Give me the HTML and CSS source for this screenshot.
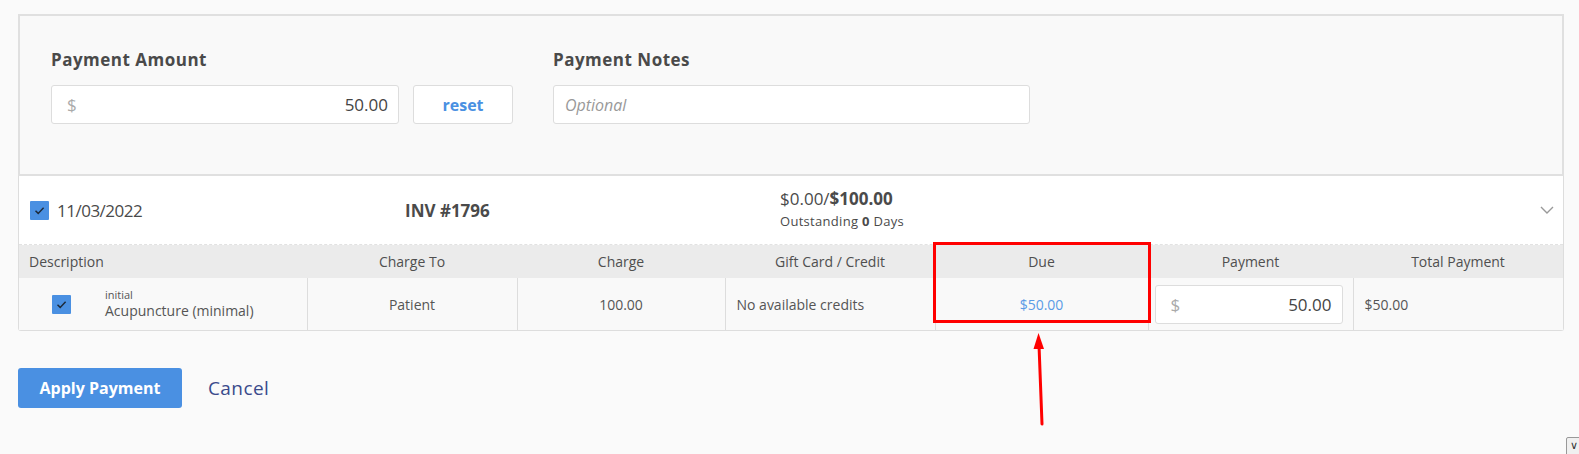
FILE: index.html
```html
<!DOCTYPE html>
<html lang="en">
<head>
    <meta charset="UTF-8">
    <meta name="viewport" content="width=device-width, initial-scale=1.0">
    <title>Apply Payment</title>
    <link rel="stylesheet" href="styles.css">
</head>
<body>
    <div class="page">
        <div class="payment-panel">
            <div class="field">
                <div class="field-label">Payment Amount</div>
                <div class="field-row">
                    <div class="money-input amount-input">
                        <span class="currency">$</span>
                        <span class="money-value">50.00</span>
                    </div>
                    <button class="btn-reset">reset</button>
                </div>
            </div>
            <div class="field">
                <div class="field-label">Payment Notes</div>
                <div class="text-input notes-input"><span class="placeholder">Optional</span></div>
            </div>
        </div>

        <div class="invoice">
            <div class="invoice-head">
                <div class="invoice-date">
                    <span class="checkbox">
                        <svg viewBox="0 0 19 19" width="19" height="19"><path d="M5.5 9.8 L8.2 12.4 L13.6 6.8" fill="none" stroke="#1d2a3a" stroke-width="1.5"/></svg>
                    </span>
                    <span class="date-text">11/03/2022</span>
                </div>
                <div class="invoice-number">INV #1796</div>
                <div class="invoice-balance">
                    <div class="balance-amount">$0.00/<strong>$100.00</strong></div>
                    <div class="balance-age">Outstanding <strong>0</strong> Days</div>
                </div>
                <svg class="chevron" viewBox="0 0 14 8" width="14" height="8"><path d="M1 1 L7 7 L13 1" fill="none" stroke="#999" stroke-width="1.4"/></svg>
            </div>

            <table class="charges">
                <colgroup>
                    <col style="width: 288px">
                    <col style="width: 210px">
                    <col style="width: 208px">
                    <col style="width: 210px">
                    <col style="width: 213px">
                    <col style="width: 205px">
                    <col>
                </colgroup>
                <thead>
                    <tr>
                        <th class="col-desc">Description</th>
                        <th>Charge To</th>
                        <th>Charge</th>
                        <th>Gift Card / Credit</th>
                        <th>Due</th>
                        <th>Payment</th>
                        <th>Total Payment</th>
                    </tr>
                </thead>
                <tbody>
                    <tr>
                        <td class="col-desc">
                            <div class="desc">
                                <span class="checkbox">
                                    <svg viewBox="0 0 19 19" width="19" height="19"><path d="M5.5 9.8 L8.2 12.4 L13.6 6.8" fill="none" stroke="#1d2a3a" stroke-width="1.5"/></svg>
                                </span>
                                <div class="desc-text">
                                    <div class="desc-code">initial</div>
                                    <div class="desc-name">Acupuncture (minimal)</div>
                                </div>
                            </div>
                        </td>
                        <td>Patient</td>
                        <td>100.00</td>
                        <td class="cell-left">No available credits</td>
                        <td class="due">$50.00</td>
                        <td class="cell-payment">
                            <div class="money-input row-input">
                                <span class="currency">$</span>
                                <span class="money-value">50.00</span>
                            </div>
                        </td>
                        <td class="cell-left">$50.00</td>
                    </tr>
                </tbody>
            </table>
        </div>

        <div class="actions">
            <button class="btn-apply">Apply Payment</button>
            <a class="link-cancel" href="#">Cancel</a>
        </div>

        <!-- screenshot markup: box round Due and arrow -->
        <svg class="annotation" width="1579" height="454" viewBox="0 0 1579 454">
            <rect x="934.5" y="243.5" width="215" height="78" fill="none" stroke="#ff0000" stroke-width="3"/>
            <line x1="1042" y1="424" x2="1039" y2="345" stroke="#ff0000" stroke-width="3" stroke-linecap="round"/>
            <polygon points="1038.5,333 1033.5,349 1044,349" fill="#ff0000"/>
        </svg>

        <div class="corner-tab">&#x2228;</div>
    </div>
</body>
</html>
```

FILE: styles.css
```css
body {
    margin: 0;
    background: #fafafa;
    font-family: "Open Sans", Arial, sans-serif;
    color: #4a4a4a;
}
.page {
    position: relative;
    width: 1546px;
    padding: 14px 0 0 18px;
    height: 440px;
}
.payment-panel {
    display: flex;
    gap: 40px;
    background: #f9f9f9;
    border: 2px solid #e0e0e0;
    padding: 34px 31px 50px 31px;
}
.field-label {
    font-size: 17px;
    font-weight: bold;
    line-height: 20px;
    letter-spacing: 0.5px;
    color: #4a4a4a;
    margin-bottom: 15px;
}
.field-row {
    display: flex;
    gap: 14px;
}
.money-input {
    display: flex;
    align-items: center;
    justify-content: space-between;
    box-sizing: border-box;
    background: #fff;
    border: 1px solid #ddd;
    border-radius: 3px;
    height: 39px;
    padding: 0 10px 0 15px;
    font-size: 17px;
}
.currency {
    color: #aaa;
}
.money-value {
    color: #444;
}
.amount-input {
    width: 348px;
}
.btn-reset {
    width: 100px;
    height: 39px;
    background: #fff;
    border: 1px solid #ddd;
    border-radius: 3px;
    color: #4a90e2;
    font-family: inherit;
    font-size: 16px;
    font-weight: bold;
}
.text-input {
    display: flex;
    align-items: center;
    box-sizing: border-box;
    background: #fff;
    border: 1px solid #ddd;
    border-radius: 3px;
    height: 39px;
    padding: 0 11px;
}
.notes-input {
    width: 477px;
}
.placeholder {
    color: #999;
    font-style: italic;
    font-size: 16px;
}
.invoice {
    background: #fff;
    border: 1px solid #ddd;
    border-top: none;
    border-radius: 0 0 3px 3px;
}
.invoice-head {
    display: grid;
    grid-template-columns: 375px 375px 1fr 14px;
    align-items: center;
    height: 68px;
    padding: 0 9px 0 11px;
    border-bottom: 1px dashed #e2e2e2;
}
.invoice-date {
    display: flex;
    align-items: center;
    gap: 8px;
    font-size: 17px;
}
.date-text {
    letter-spacing: -0.5px;
}
.checkbox {
    display: inline-flex;
    width: 19px;
    height: 19px;
    background: #4a90e2;
    border-radius: 1px;
}
.invoice-number {
    font-size: 17px;
    font-weight: bold;
}
.balance-amount {
    font-size: 17px;
    line-height: 22px;
}
.balance-age {
    font-size: 13px;
    line-height: 22px;
    letter-spacing: 0.3px;
}
.charges {
    width: 100%;
    border-collapse: collapse;
    table-layout: fixed;
    font-size: 14px;
}
.charges th {
    height: 33px;
    padding: 0;
    background: #ebebeb;
    font-weight: normal;
    color: #4f4f4f;
    text-align: center;
}
.charges td {
    height: 52px;
    padding: 0;
    background: #f9f9f9;
    border-left: 1px solid #ddd;
    text-align: center;
    color: #555;
}
.charges .col-desc {
    text-align: left;
    padding-left: 10px;
    border-left: none;
}
.charges .cell-left {
    text-align: left;
    padding-left: 11px;
}
.charges .due {
    color: #5b9be6;
}
.charges .cell-payment {
    padding: 0 10px 0 6px;
}
.desc {
    display: flex;
    align-items: center;
    padding-left: 23px;
    gap: 34px;
}
.desc-code {
    font-size: 11px;
    line-height: 14px;
}
.desc-name {
    font-size: 14px;
    line-height: 18px;
}
.row-input {
    padding-right: 10px;
}
.actions {
    display: flex;
    align-items: center;
    gap: 26px;
    margin-top: 37px;
}
.btn-apply {
    width: 164px;
    height: 40px;
    background: #4a90e2;
    border: none;
    border-radius: 3px;
    color: #fff;
    font-family: inherit;
    font-size: 16px;
    font-weight: bold;
}
.link-cancel {
    color: #3b4a8c;
    font-size: 19px;
    letter-spacing: 0.4px;
    text-decoration: none;
}
.annotation {
    position: absolute;
    left: 0;
    top: 0;
    pointer-events: none;
}
.corner-tab {
    position: absolute;
    left: 1566px;
    top: 437px;
    width: 20px;
    height: 20px;
    box-sizing: border-box;
    background: #f0f0f0;
    border: 1px solid #999;
    border-radius: 2px;
    font-size: 11px;
    line-height: 14px;
    padding-left: 3px;
    color: #333;
}
```
